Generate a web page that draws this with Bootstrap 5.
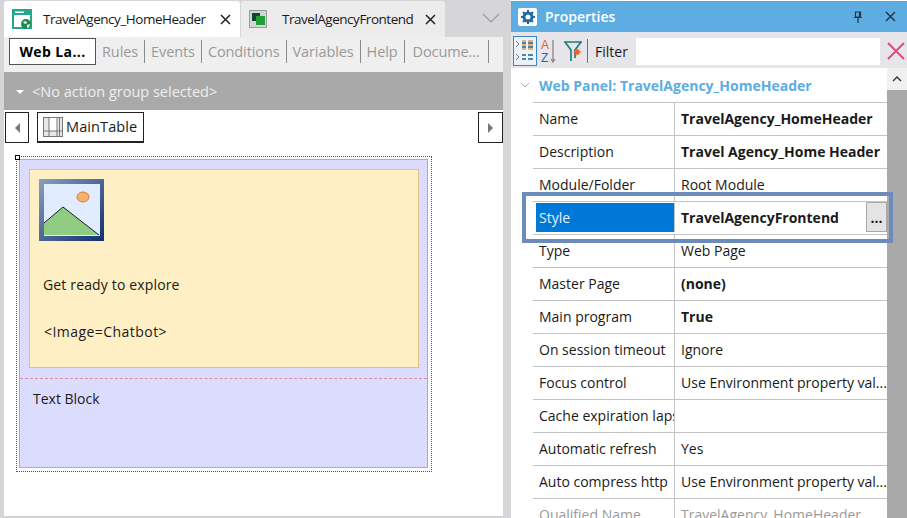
<!DOCTYPE html>
<html lang="en">

<head>
    <meta charset="UTF-8">
    <title>Properties</title>
    <link href="https://cdn.jsdelivr.net/npm/bootstrap@5.3.3/dist/css/bootstrap.min.css" rel="stylesheet">
    <style>
        html, body {
            height: 518px;
            overflow: hidden;
        }

        body {
            background-color: #d6d5d8;
            color: #1a1a1a;
            font-family: "Open Sans", "Noto Sans", sans-serif;
            font-size: 14px;
        }

        .app-shell {
            height: 518px;
            gap: 8px;
            padding-left: 4px;
        }

        .left-pane {
            width: 499px;
            flex: none;
        }

        .tab-strip {
            height: 36px;
            margin-top: 1px;
        }

        .doc-tab {
            height: 36px;
            gap: 10px;
            padding-left: 7px;
            font-size: 13.5px;
            letter-spacing: -.48px;
            border-radius: 3px 3px 0 0;
        }

        .doc-tab-on {
            width: 236px;
            background: #fff;
        }

        .doc-tab-off {
            width: 204px;
            margin-left: 1px;
            background: #ececec;
        }

        .tab-x {
            margin-left: auto;
            margin-right: 9px;
        }

        .more-btn {
            margin-left: auto;
            margin-right: 3px;
            margin-top: -2px;
        }

        .sub-tabs {
            height: 35px;
            background: #efefef;
            padding: 1px 0 0 5px;
            color: #9a9a9a;
            font-size: 14.5px;
            letter-spacing: -.1px;
        }

        .sub-tab-on {
            width: 87px;
            height: 27px;
            border: 1px solid #555;
            background: #fff;
            color: #000;
            font-weight: 700;
            font-size: 14px;
            letter-spacing: .4px;
            line-height: 25px;
            text-align: center;
            margin-right: 6px;
        }

        .sub-tab {
            border-right: 1px solid #8a8a8a;
            height: 23px;
            margin-top: 2px;
            line-height: 24px;
            padding: 0 6px;
        }

        .action-bar {
            height: 38px;
            background: #a9a9a9;
            color: #eee;
            padding: 1px 0 0 12px;
            gap: 8px;
            font-size: 14.5px;
        }

        .drop-tri {
            width: 0;
            height: 0;
            border-left: 4px solid transparent;
            border-right: 4px solid transparent;
            border-top: 4px solid #fff;
        }

        .design-area {
            background: #fff;
            height: 407px;
            border-bottom: 1px solid #d0d0d0;
        }

        .crumb-row {
            height: 46px;
            padding: 2px 0 0 1px;
        }

        .nav-sq {
            width: 24px;
            height: 31px;
            border: 1px solid #222;
        }

        .nav-sq-end {
            width: 25px;
        }

        .table-chip {
            height: 31px;
            width: 107px;
            margin-left: 8px;
            border: 1px solid #222;
            border-bottom-width: 2px;
            gap: 3px;
            padding-left: 5px;
            font-size: 14.5px;
            letter-spacing: .1px;
        }

        .tri-l {
            border-top: 5px solid transparent;
            border-bottom: 5px solid transparent;
            border-right: 5px solid #777;
        }

        .tri-r {
            border-top: 5px solid transparent;
            border-bottom: 5px solid transparent;
            border-left: 5px solid #777;
        }

        .sel-frame {
            position: relative;
            width: 416px;
            height: 316px;
            margin-left: 12px;
            border: 1px dotted #555;
            padding: 2px 3px 3px 2px;
        }

        .sel-handle {
            position: absolute;
            left: -2px;
            top: -2px;
            width: 5px;
            height: 5px;
            background: #fff;
            border: 1px solid #000;
        }

        .main-table {
            height: 100%;
            background: #dcdcff;
            border: 1px solid #e0979f;
            padding: 9px 8px 0 9px;
        }

        .yellow-cell {
            height: 199px;
            background: #ffefc4;
            border: 1px solid #e0c088;
            padding: 9px 9px;
        }

        .img-ph {
            display: block;
            width: 65px;
            height: 62px;
        }

        .cell-line {
            margin: 0;
            padding-left: 4px;
            line-height: 20px;
        }

        .line-explore {
            margin-top: 34px;
            letter-spacing: .15px;
        }

        .line-chatbot {
            margin-top: 27px;
            padding-left: 5px;
            letter-spacing: .45px;
        }

        .split-line {
            margin: 10px -8px 0 -9px;
            border-top: 1px dashed #e58a9c;
        }

        .text-block-cell {
            padding: 10px 4px;
            line-height: 20px;
        }

        .props-pane {
            width: 396px;
            flex: none;
            background: #fff;
            position: relative;
            overflow: hidden;
        }

        .props-title {
            height: 31px;
            background: #5dade2;
            color: #fff;
            font-weight: 600;
            font-size: 14px;
            padding-left: 7px;
            gap: 8px;
            margin-top: 1px;
        }

        .gear-box {
            width: 19px;
            height: 18px;
            background: #fff;
            border-radius: 2px;
        }

        .title-close {
            margin-left: 6px;
            margin-right: 11px;
        }

        .props-tools {
            height: 36px;
            background: #e6e6ea;
            padding: 2px 0 0 2px;
        }

        .tool-on {
            width: 24px;
            height: 30px;
            border: 1px solid #3a86c8;
            background: #eaf3fb;
        }

        .tool-sep {
            height: 24px;
            margin: 0 7px 0 4px;
            border-left: 1px solid #6c757d;
        }

        .filter-input {
            width: 244px;
            height: 27px;
            margin-left: 8px;
            background: #fff;
        }

        .filter-clear {
            margin-left: 6px;
        }

        .props-body {
            height: 450px;
        }

        .props-list {
            width: 376px;
            flex: none;
        }

        .group-head {
            height: 34px;
            color: #5dade2;
            font-weight: 700;
            font-size: 14px;
            gap: 9px;
            padding-left: 9px;
        }

        .prop-row {
            height: 33px;
            margin-left: 22px;
            border-top: 1px solid #c4c4c4;
            line-height: 32px;
        }

        .prop-name {
            width: 142px;
            flex: none;
            padding-left: 6px;
            white-space: nowrap;
            overflow: hidden;
            border-right: 1px solid #c4c4c4;
        }

        .prop-val {
            padding-left: 6px;
            white-space: nowrap;
            overflow: hidden;
            flex: 1;
        }

        .prop-strong {
            font-weight: 700;
        }

        .prop-dim {
            color: #9a9a9a;
        }

        .row-picked .prop-name {
            margin-left: 3px;
            width: 139px;
            height: 29px;
            margin-top: 1px;
            line-height: 29px;
            padding-left: 3px;
            background: #0078d7;
            color: #e8f2fb;
        }

        .dots-btn {
            width: 21px;
            height: 30px;
            background: #e4e4e4;
            border: 1px solid #aaa;
            line-height: 30px;
            text-align: center;
            font-weight: 700;
            flex: none;
        }

        .scroll-rail {
            width: 20px;
            flex: none;
            background: #f0f0f0;
        }

        .scroll-up {
            height: 22px;
        }

        .scroll-thumb {
            background: #a9a9a9;
            flex: 1;
        }

        .focus-box {
            position: absolute;
            left: 11px;
            top: 192px;
            width: 371px;
            height: 51px;
            border: 4px solid #6b8cba;
            pointer-events: none;
        }
    </style>
</head>

<body>
    <div class="d-flex app-shell">
        <div class="left-pane">
            <div class="d-flex tab-strip">
                <div class="d-flex align-items-center doc-tab doc-tab-on">
                    <svg width="22" height="22" viewBox="0 0 22 22">
                        <rect x="1" y="1" width="20" height="20" fill="#23a88c" />
                        <rect x="3" y="7" width="16" height="12" fill="#fff" />
                        <rect x="4" y="3.500" width="9" height="1.500" fill="#fff" />
                        <circle cx="15" cy="16" r="5" fill="#1f8a4c" />
                        <path d="M12 14l3-1 1 2-2 1zM16 17l3-1-1 3-2 1z" fill="#fff" />
                    </svg>
                    <span>TravelAgency_HomeHeader</span>
                    <svg class="tab-x" width="11" height="11" viewBox="0 0 11 11">
                        <path d="M1 1l9 9M10 1l-9 9" stroke="#222" stroke-width="1.500" />
                    </svg>
                </div>
                <div class="d-flex align-items-center doc-tab doc-tab-off">
                    <svg width="20" height="20" viewBox="0 0 20 20">
                        <rect x="1.500" y="1.500" width="17" height="17" fill="#d5d5d5" stroke="#9a9a9a" />
                        <rect x="4" y="4" width="8" height="8" fill="#12443c" />
                        <rect x="8" y="7" width="9" height="9" fill="#1f9e3a" />
                    </svg>
                    <span class="ms-1">TravelAgencyFrontend</span>
                    <svg class="tab-x" width="11" height="11" viewBox="0 0 11 11">
                        <path d="M1 1l9 9M10 1l-9 9" stroke="#222" stroke-width="1.500" />
                    </svg>
                </div>
                <svg class="more-btn align-self-center" width="18" height="10" viewBox="0 0 18 10">
                    <path d="M1 1l8 8 8-8" fill="none" stroke="#9a9a9a" stroke-width="1.200" />
                </svg>
            </div>

            <div class="d-flex align-items-start sub-tabs">
                <div class="sub-tab-on">Web La...</div>
                <div class="sub-tab ps-0">Rules</div>
                <div class="sub-tab">Events</div>
                <div class="sub-tab">Conditions</div>
                <div class="sub-tab">Variables</div>
                <div class="sub-tab">Help</div>
                <div class="sub-tab px-2">Docume...</div>
            </div>

            <div class="d-flex align-items-center action-bar">
                <span class="drop-tri"></span>
                <span>&lt;No action group selected&gt;</span>
            </div>

            <div class="design-area">
                <div class="d-flex crumb-row">
                    <div class="nav-sq d-flex align-items-center justify-content-center"><span class="tri-l"></span></div>
                    <div class="table-chip d-flex align-items-center">
                        <svg width="20" height="20" viewBox="0 0 20 20">
                            <rect x=".5" y=".5" width="19" height="19" fill="#e8e8e8" stroke="#777" />
                            <rect x="6" y="1" width="8" height="13" fill="#fff" />
                            <path d="M6 1v18M14 1v18M16.500 1v18M1 14h18" stroke="#777" fill="none" />
                        </svg>
                        <span>MainTable</span>
                    </div>
                    <div class="nav-sq nav-sq-end d-flex align-items-center justify-content-center ms-auto"><span class="tri-r"></span></div>
                </div>

                <div class="sel-frame">
                    <span class="sel-handle"></span>
                    <div class="main-table">
                        <div class="yellow-cell">
                            <svg class="img-ph" viewBox="0 0 65 62">
                                <defs>
                                    <linearGradient id="frameGrad" x1="0" y1="0" x2="1" y2="1">
                                        <stop offset="0" stop-color="#8aa0c0" />
                                        <stop offset="1" stop-color="#0f2f70" />
                                    </linearGradient>
                                </defs>
                                <rect width="65" height="62" fill="url(#frameGrad)" />
                                <rect x="5" y="5" width="56" height="52" fill="#e2ecff" />
                                <path d="M5 44L24 28 60 56H5z" fill="#8fcb80" stroke="none" />
                                <path d="M5 44L24 28 60 56" fill="none" stroke="#123" stroke-width="1" />
                                <ellipse cx="44" cy="18" rx="6" ry="5" fill="#f5b26a" stroke="#d9773a" />
                            </svg>
                            <p class="cell-line line-explore">Get ready to explore</p>
                            <p class="cell-line line-chatbot">&lt;Image=Chatbot&gt;</p>
                        </div>
                        <div class="split-line"></div>
                        <div class="text-block-cell">Text Block</div>
                    </div>
                </div>
            </div>
        </div>

        <div class="props-pane">
            <div class="d-flex align-items-center props-title">
                <span class="gear-box d-flex align-items-center justify-content-center">
                    <svg width="14" height="14" viewBox="0 0 14 14">
                        <circle cx="7" cy="7" r="4" fill="none" stroke="#1f6aa5" stroke-width="3" />
                        <path d="M7 0v3M7 11v3M0 7h3M11 7h3M2 2l2 2M10 10l2 2M12 2l-2 2M4 10l-2 2" stroke="#1f6aa5" stroke-width="2" />
                    </svg>
                </span>
                <span>Properties</span>
                <svg class="ms-auto me-2" width="10" height="12" viewBox="0 0 10 12">
                    <path d="M2.500 1h5v5h-5zM1 6.500h8M5 7v5M6.500 1v5" fill="none" stroke="#24384a" stroke-width="1.200" />
                </svg>
                <svg class="title-close" width="11" height="11" viewBox="0 0 11 11">
                    <path d="M1 1l9 9M10 1l-9 9" stroke="#24384a" stroke-width="1.500" />
                </svg>
            </div>

            <div class="d-flex align-items-center props-tools">
                <div class="tool-on d-flex align-items-center justify-content-center">
                    <svg width="20" height="26" viewBox="0 0 20 26">
                        <path d="M1 3l3 3-3 3M1 16l3 3-3 3" fill="none" stroke="#777" />
                        <path d="M7 3h4M13 3h5M7 7h4M13 7h5M7 11h4M13 11h5" stroke="#e59a4a" stroke-width="1.500" />
                        <path d="M7 5h4M13 5h5M7 9h4M13 9h5M7 17h4M13 17h5M7 21h4M13 21h5" stroke="#1f5f8a" stroke-width="1.500" />
                    </svg>
                </div>
                <svg class="ms-1" width="18" height="28" viewBox="0 0 18 28">
                    <text x="0" y="12" font-size="12" fill="#e0603a" font-family="Liberation Sans">A</text>
                    <text x="0" y="25" font-size="12" fill="#1f6aa5" font-family="Liberation Sans">Z</text>
                    <path d="M12 3v22M10 22l2 3 2-3" fill="none" stroke="#888" stroke-width="1.300" />
                </svg>
                <svg class="ms-1" width="20" height="22" viewBox="0 0 20 22">
                    <path d="M1 2h18M2 2l6 8v11M18 2l-6 8v8" fill="none" stroke="#1e7f7a" stroke-width="1.700" />
                    <path d="M14 8l1 2 2-1-1 2 3 1-3 1 1 2-2-1-1 2-1-2-2 1 1-2-2-1 2-1-1-2 2 1z" fill="#f0602a" />
                </svg>
                <span class="tool-sep"></span>
                <span>Filter</span>
                <div class="filter-input"></div>
                <svg class="filter-clear" width="20" height="20" viewBox="0 0 20 20">
                    <path d="M2 2l16 16M18 2L2 18" stroke="#dc4a78" stroke-width="1.800" />
                </svg>
            </div>

            <div class="d-flex props-body">
                <div class="props-list">
                    <div class="d-flex align-items-center group-head">
                        <svg width="10" height="6" viewBox="0 0 10 6">
                            <path d="M1 1l4 4 4-4" fill="none" stroke="#aaa" />
                        </svg>
                        <span>Web Panel: TravelAgency_HomeHeader</span>
                    </div>
                    <div class="d-flex prop-row"><div class="prop-name">Name</div><div class="prop-val prop-strong">TravelAgency_HomeHeader</div></div>
                    <div class="d-flex prop-row"><div class="prop-name">Description</div><div class="prop-val prop-strong">Travel Agency_Home Header</div></div>
                    <div class="d-flex prop-row"><div class="prop-name">Module/Folder</div><div class="prop-val">Root Module</div></div>
                    <div class="d-flex prop-row row-picked"><div class="prop-name">Style</div><div class="prop-val prop-strong">TravelAgencyFrontend</div><div class="dots-btn">...</div></div>
                    <div class="d-flex prop-row"><div class="prop-name">Type</div><div class="prop-val">Web Page</div></div>
                    <div class="d-flex prop-row"><div class="prop-name">Master Page</div><div class="prop-val prop-strong">(none)</div></div>
                    <div class="d-flex prop-row"><div class="prop-name">Main program</div><div class="prop-val prop-strong">True</div></div>
                    <div class="d-flex prop-row"><div class="prop-name">On session timeout</div><div class="prop-val">Ignore</div></div>
                    <div class="d-flex prop-row"><div class="prop-name">Focus control</div><div class="prop-val">Use Environment property val...</div></div>
                    <div class="d-flex prop-row"><div class="prop-name">Cache expiration lapse</div><div class="prop-val"></div></div>
                    <div class="d-flex prop-row"><div class="prop-name">Automatic refresh</div><div class="prop-val">Yes</div></div>
                    <div class="d-flex prop-row"><div class="prop-name">Auto compress http</div><div class="prop-val">Use Environment property val...</div></div>
                    <div class="d-flex prop-row prop-dim"><div class="prop-name">Qualified Name</div><div class="prop-val">TravelAgency_HomeHeader</div></div>
                </div>
                <div class="scroll-rail d-flex flex-column">
                    <div class="scroll-up d-flex align-items-center justify-content-center">
                        <svg width="10" height="6" viewBox="0 0 10 6">
                            <path d="M1 5l4-4 4 4" fill="none" stroke="#333" stroke-width="1.400" />
                        </svg>
                    </div>
                    <div class="scroll-thumb"></div>
                </div>
            </div>

            <div class="focus-box"></div>
        </div>
    </div>

    <script src="https://cdn.jsdelivr.net/npm/bootstrap@5.3.3/dist/js/bootstrap.bundle.min.js"></script>
</body>

</html>
